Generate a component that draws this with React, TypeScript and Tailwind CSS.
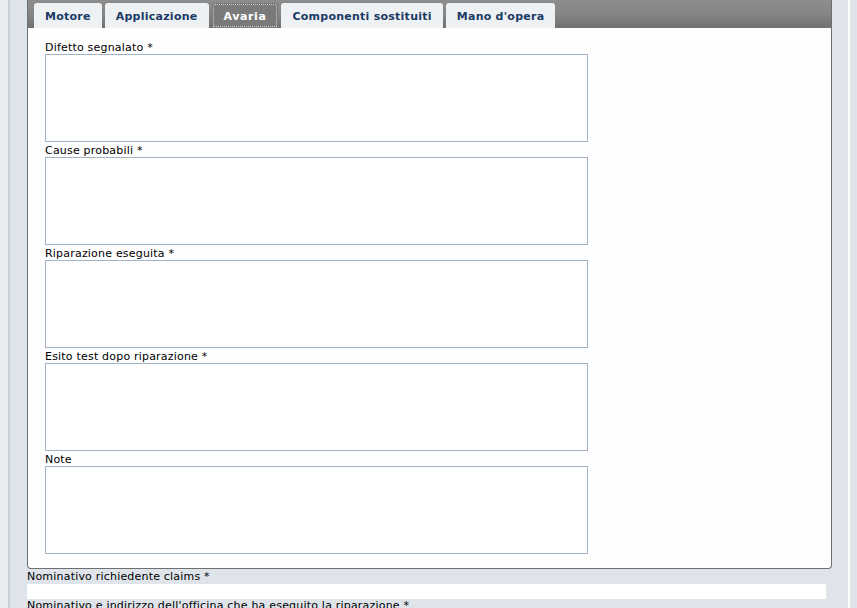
const tabs = ['Motore', 'Applicazione', 'Avaria', 'Componenti sostituiti', "Mano d'opera"];

const fields = [
  'Difetto segnalato *',
  'Cause probabili *',
  'Riparazione eseguita *',
  'Esito test dopo riparazione *',
  'Note',
];

export default function App() {
  const active = 'Avaria';

  return (
    <div
      className="flex h-[608px] w-[857px] overflow-hidden bg-[#dfe4ea] text-[11px] tracking-[0.2px] text-black"
      style={{ fontFamily: '"DejaVu Sans", Verdana, sans-serif' }}
    >
      {/* left strip */}
      <div className="w-[8px] shrink-0 bg-[#e9ecef]" />
      <div className="w-[2px] shrink-0 bg-[#c9d0d7]" />

      <div className="flex w-[838px] shrink-0 flex-col pl-[17px]">
        {/* tab panel */}
        <div className="w-[805px] shrink-0 overflow-hidden rounded-b-[4px] border border-t-0 border-[#6f6f6f] bg-[#fefefe]">
          <div className="flex h-[28px] items-end gap-[3px] bg-gradient-to-b from-[#8d8d8d] via-[#858585] to-[#707070] pl-[6px]">
            {tabs.map((t) => (
              <div
                key={t}
                className={
                  t === active
                    ? 'flex h-[25px] items-center rounded-t-[3px] bg-[#7a7a7a] px-[12px] pt-[3px] font-bold tracking-[0.6px] text-white outline-1 outline-dotted outline-offset-[-2px] outline-[#cfcfcf]'
                    : 'flex h-[25px] items-center rounded-t-[3px] bg-[#eef1f4] px-[11px] pt-[3px] font-bold tracking-[0.25px] text-[#1b3a63]'
                }
              >
                {t}
              </div>
            ))}
          </div>

          <div className="flex flex-col px-[17px] pb-[14px] pt-[11px]">
            {fields.map((f) => (
              <div key={f} className="flex flex-col">
                <label className="h-[15px] leading-[18px]">{f}</label>
                <textarea className="h-[88px] w-[543px] resize-none border border-[#a3b3c6] bg-white outline-none" />
              </div>
            ))}
          </div>
        </div>

        {/* below panel */}
        <div className="flex w-[799px] shrink-0 flex-col">
          <label className="h-[15px] leading-[16px]">Nominativo richiedente claims *</label>
          <input className="h-[15px] w-full bg-white outline-none" />
          <label className="leading-[14px]">
            Nominativo e indirizzo dell'officina che ha eseguito la riparazione *
          </label>
        </div>
      </div>

      {/* right strip */}
      <div className="w-[2px] shrink-0 bg-white" />
      <div className="flex-1 bg-[#dfe4ea]" />
    </div>
  );
}
